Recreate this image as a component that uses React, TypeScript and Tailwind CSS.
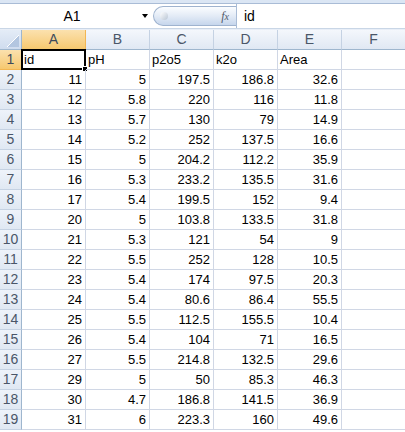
const rows: (string | number)[][] = [
  ["id", "pH", "p2o5", "k2o", "Area"],
  [11, 5, 197.5, 186.8, 32.6],
  [12, 5.8, 220, 116, 11.8],
  [13, 5.7, 130, 79, 14.9],
  [14, 5.2, 252, 137.5, 16.6],
  [15, 5, 204.2, 112.2, 35.9],
  [16, 5.3, 233.2, 135.5, 31.6],
  [17, 5.4, 199.5, 152, 9.4],
  [20, 5, 103.8, 133.5, 31.8],
  [21, 5.3, 121, 54, 9],
  [22, 5.5, 252, 128, 10.5],
  [23, 5.4, 174, 97.5, 20.3],
  [24, 5.4, 80.6, 86.4, 55.5],
  [25, 5.5, 112.5, 155.5, 10.4],
  [26, 5.4, 104, 71, 16.5],
  [27, 5.5, 214.8, 132.5, 29.6],
  [29, 5, 50, 85.3, 46.3],
  [30, 4.7, 186.8, 141.5, 36.9],
  [31, 6, 223.3, 160, 49.6],
];

const cols = ["A", "B", "C", "D", "E", "F"];

export default function App() {
  return (
    <div
      className="w-[405px] h-[432px] overflow-hidden bg-white text-[13px] text-black"
      style={{ fontFamily: '"Liberation Sans", Arial, sans-serif' }}
    >
      {/* ribbon edge */}
      <div className="h-[4px] bg-[#dbe6f4] border-b border-[#a9bcd6]" />

      {/* formula bar */}
      <div className="h-[24px] flex items-stretch bg-white">
        <div className="w-[153px] flex items-center">
          <div className="flex-1 text-center text-[14px] pl-[2px]">A1</div>
          <div className="w-0 h-0 mr-[5px] border-l-[3px] border-r-[3px] border-t-[4px] border-l-transparent border-r-transparent border-t-black" />
        </div>
        <div className="w-[83px] my-[2px] rounded-l-full border border-r-0 border-[#9fb3cf] bg-gradient-to-b from-[#fbfdff] via-[#e3ebf6] to-[#c6d6ec] flex items-center">
          <div className="ml-[6px] w-[8px] h-[8px] rounded-full bg-gradient-to-br from-[#ffffff] to-[#b9c5d4]" />
          <div
            className="ml-auto mr-[7px] text-[12px] italic text-[#50596a]"
            style={{ fontFamily: '"Liberation Serif", serif' }}
          >
            f<span className="text-[10px]">x</span>
          </div>
        </div>
        <div className="flex-1 border-l border-[#a9bcd6] flex items-center pl-[7px] text-[14px]">
          id
        </div>
      </div>
      <div className="h-[2px] bg-[#e8eef7] border-t border-[#c9d6e6]" />

      {/* sheet grid */}
      <div className="grid grid-cols-[22px_repeat(6,64px)] auto-rows-[20px]">
        <div className="relative border-r border-b border-[#9eb6ce] bg-gradient-to-b from-[#e4ecf7] to-[#cfdcee] overflow-hidden">
          <svg className="absolute right-[2px] bottom-[2px]" width="12" height="12" viewBox="0 0 12 12">
            <polygon points="12,0 12,12 0,12" fill="#b3c6e0" />
            <polyline points="12,0 0,12" stroke="#ffffff" strokeWidth="1" fill="none" />
          </svg>
        </div>
        {cols.map((c, i) => (
          <div
            key={c}
            className={
              i === 0
                ? "flex items-center justify-center border-r border-b border-[#f2b653] bg-gradient-to-b from-[#fbe1ae] to-[#f6c86e] text-[14px] text-[#3d4a5b]"
                : "flex items-center justify-center border-r border-b border-r-[#c5d2e3] border-b-[#9eb6ce] bg-gradient-to-b from-[#f4f7fc] to-[#e0e8f3] text-[14px] text-[#4a5668]"
            }
          >
            {c}
          </div>
        ))}

        {rows.map((r, ri) => (
          <Row key={ri} n={ri + 1} cells={r} />
        ))}
      </div>
    </div>
  );
}

function Row({ n, cells }: { n: number; cells: (string | number)[] }) {
  const selected = n === 1;
  return (
    <>
      <div
        className={
          selected
            ? "flex items-center justify-center border-r border-b border-[#f2b653] bg-gradient-to-b from-[#fbe1ae] to-[#f6c86e] text-[14px] text-[#3d4a5b]"
            : "flex items-center justify-center border-r border-b border-r-[#9eb6ce] border-b-[#c5d2e3] bg-gradient-to-b from-[#eef3fa] to-[#e0e8f3] text-[14px] text-[#4a5668]"
        }
      >
        {n}
      </div>
      {[0, 1, 2, 3, 4, 5].map((ci) => {
        const v = cells[ci];
        const isNum = typeof v === "number";
        return (
          <div
            key={ci}
            className={
              "relative flex items-center border-r border-b border-[#d0d7e5] " +
              (isNum ? "justify-end pr-[3px]" : "justify-start pl-[2px]")
            }
          >
            {v !== undefined ? String(v) : ""}
            {selected && ci === 0 && (
              <>
                <div className="absolute -left-[1px] -top-[1px] right-[-1px] bottom-[-1px] border-2 border-black pointer-events-none" />
                <div className="absolute right-[-3px] bottom-[-3px] w-[6px] h-[6px] bg-black border border-white" />
              </>
            )}
          </div>
        );
      })}
    </>
  );
}
